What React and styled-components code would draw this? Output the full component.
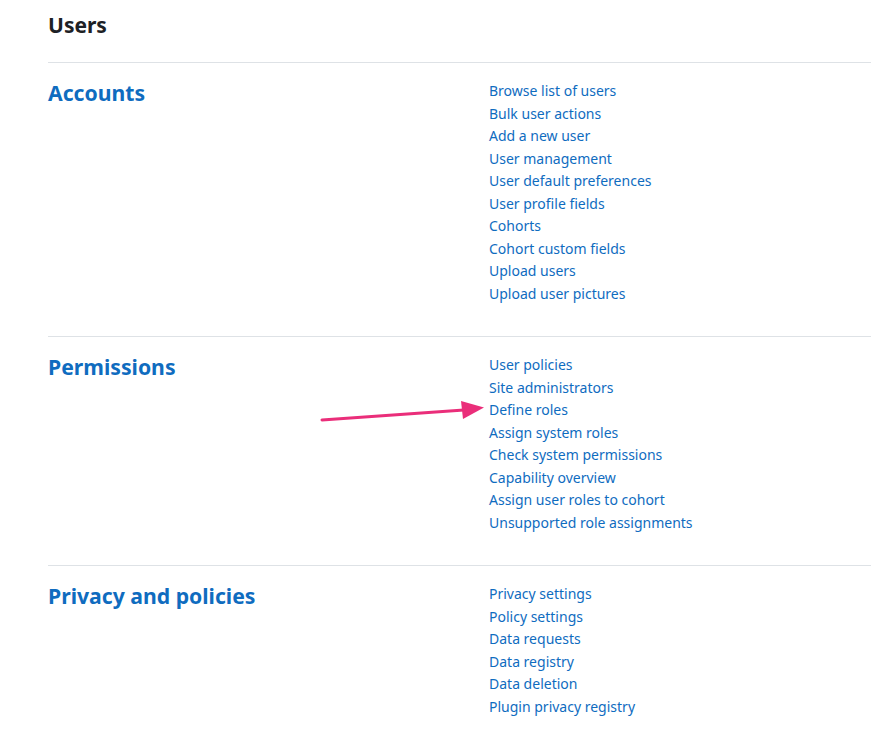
import React from 'react';
import styled, { createGlobalStyle } from 'styled-components';

const GlobalStyle = createGlobalStyle`
  body {
    margin: 0;
    background: #fff;
    font-family: "Noto Sans", "Open Sans", sans-serif;
  }
`

const Page = styled.div`
  position: relative;
  padding: 0 0 0 48px;
  width: 871px;
  box-sizing: border-box;
`
const Title = styled.h2`
  margin: 0;
  padding-top: 11px;
  height: 62px;
  box-sizing: border-box;
  font-size: 21px;
  font-weight: 700;
  line-height: 28px;
  color: #1d2125;
`
const Section = styled.section`
  display: grid;
  grid-template-columns: 441px 1fr;
  border-top: 1px solid #dee2e6;
  padding: 16px 0 ${props => props.bottom || '31px'};
`
const Heading = styled.h3`
  margin: 0;
  font-size: 21.2px;
  font-weight: 700;
  line-height: 28px;
  color: #0f6cbf;
`
const LinkList = styled.ul`
  list-style: none;
  margin: 0;
  padding: 1px 0 0;
`
const LinkItem = styled.li`
  font-size: 14px;
  line-height: 22.5px;
  color: #0f6cbf;
`
const Arrow = styled.svg`
  position: absolute;
  left: 318px;
  top: 398px;
`

const sections = [
  {
    title: 'Accounts',
    links: ['Browse list of users', 'Bulk user actions', 'Add a new user', 'User management', 'User default preferences', 'User profile fields', 'Cohorts', 'Cohort custom fields', 'Upload users', 'Upload user pictures'],
  },
  {
    title: 'Permissions',
    links: ['User policies', 'Site administrators', 'Define roles', 'Assign system roles', 'Check system permissions', 'Capability overview', 'Assign user roles to cohort', 'Unsupported role assignments'],
  },
  {
    title: 'Privacy and policies',
    links: ['Privacy settings', 'Policy settings', 'Data requests', 'Data registry', 'Data deletion', 'Plugin privacy registry'],
    bottom: '16px',
  },
]

export default function App() {
  return (
    <Page>
      <GlobalStyle />
      <Title>Users</Title>
      {sections.map(s => (
        <Section key={s.title} bottom={s.bottom}>
          <Heading>{s.title}</Heading>
          <LinkList>
            {s.links.map(l => <LinkItem key={l}>{l}</LinkItem>)}
          </LinkList>
        </Section>
      ))}
      <Arrow width="170" height="26" viewBox="0 0 170 26">
        <line x1="4" y1="22" x2="146" y2="12" stroke="#ea2e7a" strokeWidth="3" strokeLinecap="round" />
        <polygon points="166,9.5 143,3 145,21" fill="#ea2e7a" />
      </Arrow>
    </Page>
  )
}
